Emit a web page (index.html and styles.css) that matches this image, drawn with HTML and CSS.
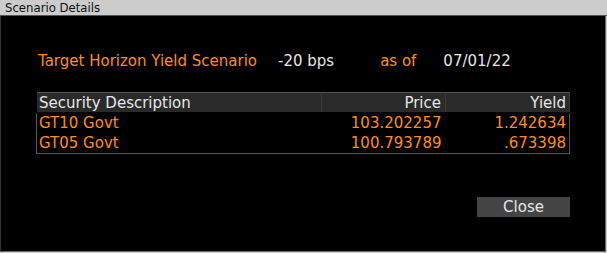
FILE: index.html
```html
<!DOCTYPE html>
<html lang="en">
<head>
    <meta charset="UTF-8">
    <title>Scenario Details</title>
    <link rel="stylesheet" href="styles.css">
</head>
<body>
    <div class="window">
        <div class="titlebar">Scenario Details</div>
        <div class="content">
            <div class="scenario">
                <span class="label">Target Horizon Yield Scenario</span>
                <span class="value bps">-20 bps</span>
                <span class="label asof">as of</span>
                <span class="value">07/01/22</span>
            </div>

            <table class="grid">
                <thead>
                    <tr>
                        <th class="desc">Security Description</th>
                        <th class="num price">Price</th>
                        <th class="num">Yield</th>
                    </tr>
                </thead>
                <tbody>
                    <tr>
                        <td class="desc">GT10 Govt</td>
                        <td class="num price">103.202257</td>
                        <td class="num">1.242634</td>
                    </tr>
                    <tr>
                        <td class="desc">GT05 Govt</td>
                        <td class="num price">100.793789</td>
                        <td class="num">.673398</td>
                    </tr>
                </tbody>
            </table>

            <div class="actions">
                <button class="close">Close</button>
            </div>
        </div>
    </div>
</body>
</html>
```

FILE: styles.css
```css
body {
    margin: 0;
    background: #d4d4d4;
    font-family: "DejaVu Sans", sans-serif;
}

.window {
    width: 607px;
    height: 253px;
    display: flex;
    flex-direction: column;
    background: #cccccc;
}

.titlebar {
    height: 15px;
    line-height: 15px;
    padding-left: 5px;
    font-family: "DejaVu Sans Condensed", "DejaVu Sans", sans-serif;
    font-size: 13px;
    color: #101010;
    background: #cccccc;
    border-bottom: 1px solid #555555;
}

.content {
    flex: 1;
    margin: 0 1px 1px 0;
    background: #000000;
    border-left: 1px solid #333333;
    border-right: 1px solid #6a6a6a;
    border-bottom: 1px solid #6a6a6a;
    padding: 0 0 0 35px;
}

.scenario {
    display: flex;
    align-items: baseline;
    margin-top: 36px;
    padding-left: 2px;
    font-size: 15px;
    height: 20px;
}

.label {
    color: #ff8c1a;
}

.value {
    color: #e6e6e6;
}

.bps {
    margin-left: 21px;
    margin-right: 46px;
}

.asof {
    margin-right: 27px;
}

.grid {
    margin-top: 20px;
    width: 534px;
    border-collapse: collapse;
    border: 1px solid #555555;
    font-size: 15px;
}

.grid th {
    background: #2a2a2a;
    color: #e6e6e6;
    font-weight: normal;
    height: 19px;
    padding: 0 2px;
    text-align: left;
    border-left: 1px solid #000000;
    border-right: 1px solid #3a3a3a;
    border-bottom: 1px solid #000000;
}

.grid td {
    color: #ff8c1a;
    height: 20px;
    padding: 0 2px;
}

.grid .desc {
    width: 280px;
}

.grid .price {
    width: 117px;
}

.grid .num {
    text-align: right;
    padding-right: 3px;
}

.grid .price.num {
    padding-right: 4px;
}

.actions {
    display: flex;
    justify-content: flex-end;
    margin-top: 43px;
    padding-right: 35px;
}

.close {
    width: 93px;
    height: 20px;
    padding: 0;
    border: none;
    background: #444444;
    color: #e6e6e6;
    font-family: inherit;
    font-size: 15px;
    line-height: 20px;
}
```
